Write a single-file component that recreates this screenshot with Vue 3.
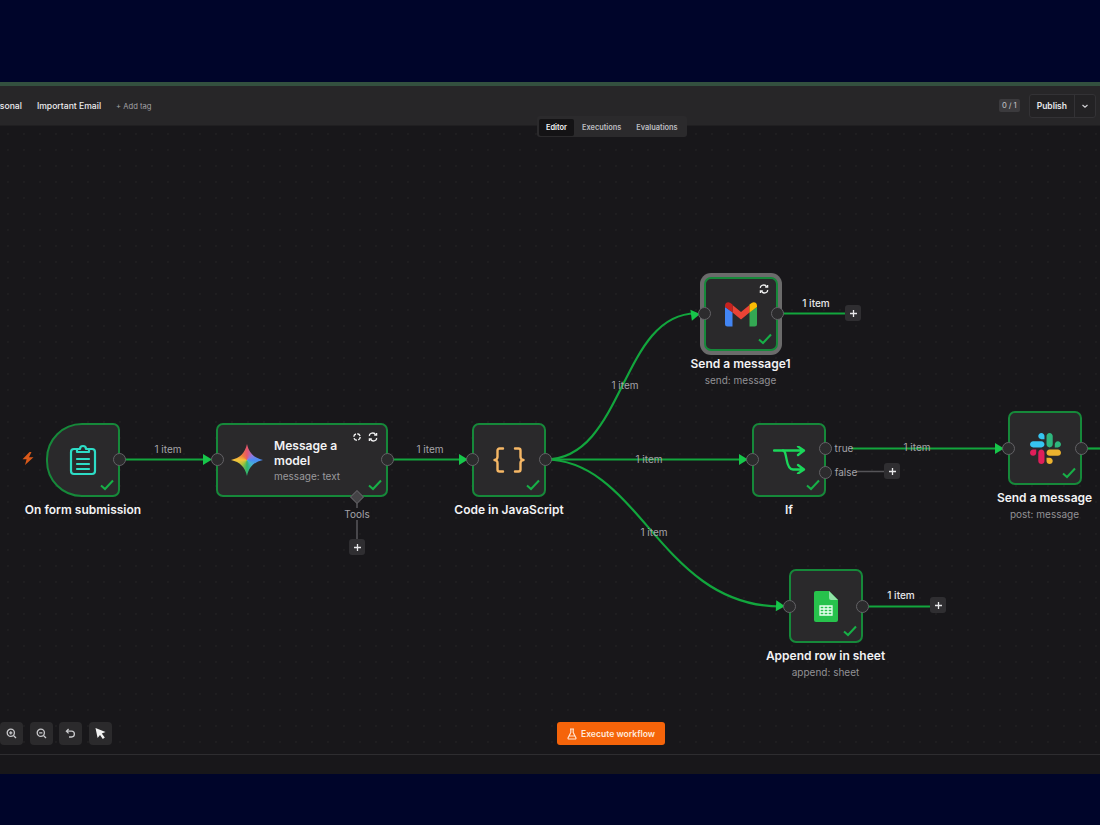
<script setup>
const TOP = 126;

const nodes = [
	{ id: 'form', x: 46, y: 423, w: 74, h: 74, trigger: true, icon: 'form', name: 'On form submission', cx: 83 },
	{ id: 'gemini', x: 216, y: 423, w: 172, h: 74, icon: 'gemini', wide: true },
	{ id: 'code', x: 472, y: 423, w: 74, h: 74, icon: 'code', name: 'Code in JavaScript', cx: 509 },
	{ id: 'gmail', x: 704, y: 277, w: 74, h: 74, icon: 'gmail', name: 'Send a message1', sub: 'send: message', cx: 740.5, selected: true },
	{ id: 'if', x: 752, y: 423, w: 74, h: 74, icon: 'if', name: 'If', cx: 789 },
	{ id: 'slack', x: 1008, y: 411, w: 74, h: 74, icon: 'slack', name: 'Send a message', sub: 'post: message', cx: 1044.5 },
	{ id: 'sheet', x: 789, y: 569, w: 74, h: 74, icon: 'sheet', name: 'Append row in sheet', sub: 'append: sheet', cx: 825.5 },
];

const ports = [
	[119, 459], [217, 459], [387, 459], [472, 459], [545, 459], [704, 313], [777, 313],
	[752, 459], [825, 448], [825, 472], [1008, 448], [1081, 448], [789, 606], [862, 606],
];

const edges = [
	'M119 459 H208',
	'M387 459 H464',
	'M545 459 C625 459 620 313 696 313',
	'M545 459 H744',
	'M545 459 C640 459 660 606 781 606',
	'M777 313 H845',
	'M851 448 H1000',
	'M862 606 H930',
	'M1081 448 H1100',
];

const arrows = [
	[216, 459, 0], [472, 459, 0], [704, 313, -8], [752, 459, 0], [789, 606, 3], [1008, 448, 0],
];

const labels = [
	{ text: '1 item', x: 168, y: 449 },
	{ text: '1 item', x: 430, y: 449 },
	{ text: '1 item', x: 625, y: 385 },
	{ text: '1 item', x: 649, y: 459 },
	{ text: '1 item', x: 654, y: 532 },
	{ text: '1 item', x: 816, y: 303, bright: true },
	{ text: '1 item', x: 917, y: 447 },
	{ text: '1 item', x: 901, y: 595, bright: true },
	{ text: 'true', x: 844, y: 448 },
	{ text: 'false', x: 846, y: 472 },
	{ text: 'Tools', x: 357, y: 514, solid: true },
];

const pluses = [
	[357, 547], [853, 313], [892, 471], [938, 605],
];

const place = (x, y) => ({ left: x + 'px', top: y - TOP + 'px' });
</script>

<template>
	<div class="page">
		<div class="band-top"></div>
		<div class="frame">
			<header class="header">
				<div class="tags">
					<span class="tag">Personal</span>
					<span class="tag">Important Email</span>
					<span class="add-tag">+ Add tag</span>
				</div>
				<div class="actions">
					<span class="count">0 / 1</span>
					<div class="publish">
						<span class="publish-label">Publish</span>
						<span class="publish-arrow">
							<svg width="10" height="10" viewBox="0 0 10 10"><path d="M2.5 4 L5 6.2 L7.5 4" fill="none" stroke="#cfcfd2" stroke-width="1.2" /></svg>
						</span>
					</div>
				</div>
			</header>

			<div class="tabs">
				<span class="tab active">Editor</span>
				<span class="tab">Executions</span>
				<span class="tab">Evaluations</span>
			</div>

			<main class="canvas">
				<svg class="wires" width="1100" height="628" viewBox="0 125.5 1100 628">
					<path d="M856 471 H885 M357 500 V540" stroke="#555458" stroke-width="1.6" fill="none" />
					<path v-for="(d, i) in edges" :key="i" :d="d" stroke="#12a63d" stroke-width="2.2" fill="none" />
					<path
						v-for="(a, i) in arrows"
						:key="'a' + i"
						d="M-13 -5.5 L-4 0 L-13 5.5 Z"
						fill="#17c64a"
						:transform="`translate(${a[0]} ${a[1]}) rotate(${a[2]})`"
					/>
				</svg>

				<div
					v-for="n in nodes"
					:key="n.id"
					class="node"
					:class="{ trigger: n.trigger, selected: n.selected }"
					:style="{ ...place(n.x, n.y), width: n.w + 'px', height: n.h + 'px' }"
				>
					<svg v-if="n.icon === 'form'" class="icon" width="28" height="32" viewBox="0 0 28 32" fill="none" stroke="#2ddcc6" stroke-width="2.2" stroke-linejoin="round" stroke-linecap="round">
						<path d="M8 5 H5 a3 3 0 0 0 -3 3 V27 a3 3 0 0 0 3 3 H23 a3 3 0 0 0 3 -3 V8 a3 3 0 0 0 -3 -3 H20" />
						<path d="M8 8 V5 H11 a3 3 0 0 1 6 0 H20 V8 Z" />
						<path d="M8 15 H20 M8 20 H20 M8 25 H20" />
					</svg>

					<template v-if="n.icon === 'gemini'">
						<div class="gemini"></div>
						<div class="gemini-text">
							<div class="gemini-title">Message a<br />model</div>
							<div class="gemini-sub">message: text</div>
						</div>
						<div class="badges">
							<svg width="10" height="10" viewBox="0 0 10 10" fill="none" stroke="#f2f2f2" stroke-width="1.4"><circle cx="5" cy="5" r="3.2" stroke-dasharray="3.6 1.4" /></svg>
							<svg width="10" height="10" viewBox="0 0 10 10" fill="none" stroke="#f2f2f2" stroke-width="1.3"><path d="M1.5 4 a3 2.4 0 0 1 6 -1 M8.5 6 a3 2.4 0 0 1 -6 1 M6.2 3.2 H8.6 V1 M3.8 6.8 H1.4 V9" /></svg>
						</div>
					</template>

					<svg v-if="n.icon === 'code'" class="icon" width="32" height="26" viewBox="0 0 32 26" fill="none" stroke="#f6b765" stroke-width="2.4" stroke-linecap="round" stroke-linejoin="round">
						<path d="M10 1.5 H6.5 a2 2 0 0 0 -2 2 V10 a3 3 0 0 1 -3 3 a3 3 0 0 1 3 3 V22.5 a2 2 0 0 0 2 2 H10" />
						<path d="M22 1.5 H25.5 a2 2 0 0 1 2 2 V10 a3 3 0 0 0 3 3 a3 3 0 0 0 -3 3 V22.5 a2 2 0 0 1 -2 2 H22" />
					</svg>

					<template v-if="n.icon === 'gmail'">
						<svg class="icon" width="32" height="25" viewBox="0 0 32 25">
							<path d="M0 5 V22 a2.5 2.5 0 0 0 2.5 2.5 H7.5 V10 Z" fill="#4285f4" />
							<path d="M32 5 V22 a2.5 2.5 0 0 1 -2.5 2.5 H24.5 V10 Z" fill="#34a853" />
							<path d="M24.5 3 L16 10 L7.5 3 L7.5 10.5 L16 17.5 L24.5 10.5 Z" fill="#ea4335" />
							<path d="M24.5 10.5 V2.5 L27 0.7 C29 -0.6 32 0.6 32 3.5 V5 Z" fill="#fbbc04" />
							<path d="M7.5 10.5 V2.5 L5 0.7 C3 -0.6 0 0.6 0 3.5 V5 Z" fill="#c5221f" />
						</svg>
						<div class="badges one">
							<svg width="10" height="10" viewBox="0 0 10 10" fill="none" stroke="#f2f2f2" stroke-width="1.3"><path d="M1.5 4 a3 2.4 0 0 1 6 -1 M8.5 6 a3 2.4 0 0 1 -6 1 M6.2 3.2 H8.6 V1 M3.8 6.8 H1.4 V9" /></svg>
						</div>
					</template>

					<svg v-if="n.icon === 'if'" class="icon" width="33" height="28" viewBox="0 0 33 28" fill="none" stroke="#1bd65a" stroke-width="2.3" stroke-linecap="round" stroke-linejoin="round">
						<path d="M1 4.5 H30 M25 0.5 L31 4.5 L25 9" />
						<path d="M10 4.5 C12 4.5 12.5 8 13.5 13 C14.5 19 16 23.5 20 23.5 H30 M25 19 L31 23.5 L25 27.5" />
					</svg>

					<svg v-if="n.icon === 'slack'" class="icon" width="31" height="31" viewBox="0 0 2447.6 2452.5">
						<path fill="#36c5f0" d="M897.4 0c-135.3.1-244.8 109.9-244.7 245.2-.1 135.3 109.5 245.1 244.8 245.2h244.8v-245.1C1142.3 110.1 1032.7.3 897.4 0m0 654H244.8C109.5 654.1-.1 763.9 0 899.2c-.2 135.3 109.4 245.1 244.7 245.3h652.7c135.3-.1 244.9-109.9 244.8-245.2.1-135.4-109.5-245.2-244.8-245.3z" />
						<path fill="#2eb67d" d="M2447.6 899.2c.1-135.3-109.5-245.1-244.8-245.2-135.3.1-244.9 109.9-244.8 245.2v245.3h244.8c135.3-.1 244.9-109.9 244.8-245.3zm-652.7 0V245.2c.1-135.2-109.4-245-244.7-245.2-135.3.1-244.9 109.9-244.8 245.2v654c-.2 135.3 109.4 245.1 244.7 245.3 135.3-.1 244.9-109.9 244.8-245.3z" />
						<path fill="#ecb22e" d="M1550.1 2452.5c135.3-.1 244.9-109.9 244.8-245.2.1-135.3-109.5-245.1-244.8-245.2h-244.8v245.2c-.1 135.2 109.5 245 244.8 245.2zm0-654.1h652.7c135.3-.1 244.9-109.9 244.8-245.2.2-135.3-109.4-245.1-244.7-245.3h-652.7c-135.3.1-244.9 109.9-244.8 245.2-.1 135.4 109.4 245.2 244.7 245.3z" />
						<path fill="#e01e5a" d="M0 1553.2c-.1 135.3 109.5 245.1 244.8 245.2 135.3-.1 244.9-109.9 244.8-245.2v-245.2H244.8c-135.3.1-244.9 109.9-244.8 245.2zm652.7 0v654c-.2 135.3 109.4 245.1 244.7 245.3 135.3-.1 244.9-109.9 244.8-245.2v-653.9c.2-135.3-109.4-245.1-244.7-245.3-135.4 0-244.9 109.8-244.8 245.1z" />
					</svg>

					<svg v-if="n.icon === 'sheet'" class="icon" width="24" height="31" viewBox="0 0 24 31">
						<path d="M2 0 H15 L24 9 V29 a2 2 0 0 1 -2 2 H2 a2 2 0 0 1 -2 -2 V2 a2 2 0 0 1 2 -2 Z" fill="#27c24c" />
						<path d="M15 0 L24 9 H17 a2 2 0 0 1 -2 -2 Z" fill="#8fe3a6" />
						<path d="M6 15 H18 V24 H6 Z M10 15 V24 M14 15 V24 M6 18 H18 M6 21 H18" fill="none" stroke="#eafff0" stroke-width="1.3" />
					</svg>

					<svg class="check" width="14" height="12" viewBox="0 0 14 12" fill="none" stroke="#17b047" stroke-width="2">
						<path d="M1 6.5 L5 10 L13 1.5" />
					</svg>
				</div>

				<template v-for="n in nodes" :key="'text' + n.id">
					<div v-if="n.name" class="node-text" :style="place(n.cx, n.y + n.h + 5)">
						<div class="node-name">{{ n.name }}</div>
						<div v-if="n.sub" class="node-sub">{{ n.sub }}</div>
					</div>
				</template>

				<span v-for="(p, i) in ports" :key="'p' + i" class="port" :style="place(p[0], p[1])"></span>
				<span class="diamond" :style="place(357, 497)"></span>

				<span
					v-for="(l, i) in labels"
					:key="'l' + i"
					class="edge-label"
					:class="{ bright: l.bright, solid: l.solid }"
					:style="place(l.x, l.y)"
					>{{ l.text }}</span
				>

				<span v-for="(p, i) in pluses" :key="'b' + i" class="plus" :style="place(p[0], p[1])">
					<svg width="9" height="9" viewBox="0 0 9 9"><path d="M4.5 1 V8 M1 4.5 H8" stroke="#e8e8ea" stroke-width="1.3" /></svg>
				</span>

				<svg class="bolt" :style="place(22, 452)" width="12" height="13" viewBox="0 0 12 13">
					<path d="M7.5 0 L0.5 7.2 H4.6 L3 13 L11.5 5.2 H7 L9.5 0 Z" fill="#d9591a" />
				</svg>

				<div class="zoom-bar">
					<button class="tool">
						<svg width="11" height="11" viewBox="0 0 11 11" fill="none" stroke="#c9c9cc" stroke-width="1.3"><circle cx="4.8" cy="4.8" r="3.6" /><path d="M7.5 7.5 L10 10 M3.2 4.8 H6.4 M4.8 3.2 V6.4" /></svg>
					</button>
					<button class="tool">
						<svg width="11" height="11" viewBox="0 0 11 11" fill="none" stroke="#c9c9cc" stroke-width="1.3"><circle cx="4.8" cy="4.8" r="3.6" /><path d="M7.5 7.5 L10 10 M3.2 4.8 H6.4" /></svg>
					</button>
					<button class="tool">
						<svg width="11" height="11" viewBox="0 0 11 11" fill="none" stroke="#c9c9cc" stroke-width="1.3"><path d="M3.6 1 L1.4 3.2 L3.6 5.4 M1.6 3.2 H6.5 a2.8 2.8 0 0 1 0 5.8 H4" /></svg>
					</button>
					<button class="tool">
						<svg width="13" height="13" viewBox="0 0 13 13"><path d="M1.5 1 L11.5 5 L7.8 6.6 L10.8 10.6 L8.8 12 L6 8 L3.6 11 Z" fill="#f2f2f2" /></svg>
					</button>
				</div>

				<button class="execute">
					<svg width="10" height="12" viewBox="0 0 10 12" fill="none" stroke="#ffe3d1" stroke-width="1.2" stroke-linejoin="round"><path d="M3 1 H7 M3.8 1 V4.5 L1 10 a0.8 0.8 0 0 0 0.7 1 H8.3 a0.8 0.8 0 0 0 0.7 -1 L6.2 4.5 V1 M2.4 8 H7.6" /></svg>
					Execute workflow
				</button>
			</main>

			<footer class="footer"></footer>
		</div>
		<div class="band-bottom"></div>
	</div>
</template>

<style scoped>
.page {
	width: 1100px;
	height: 825px;
	overflow: hidden;
	display: flex;
	flex-direction: column;
	background-color: #00052a;
	font-family: Inter, 'Liberation Sans', sans-serif;
}
.band-top {
	height: 82px;
	flex: none;
}
.band-bottom {
	height: 51px;
	flex: none;
}
.frame {
	position: relative;
	flex: 1;
	display: flex;
	flex-direction: column;
	border-top: 4px solid #33503f;
	background-color: #18171a;
}
.header {
	height: 40px;
	flex: none;
	display: flex;
	align-items: center;
	justify-content: space-between;
	background-color: #272628;
	border-bottom: 1px solid #201f21;
	box-sizing: border-box;
	padding-right: 4px;
}
.tags {
	display: flex;
	align-items: center;
	gap: 15px;
	margin-left: -14px;
	padding-top: 1px;
}
.tag {
	font-size: 8.6px;
	font-weight: 500;
	color: #ececee;
}
.add-tag {
	font-size: 7.6px;
	color: #a2a1a5;
	padding-top: 1px;
}
.actions {
	display: flex;
	align-items: center;
	gap: 9px;
}
.count {
	font-size: 7.5px;
	font-weight: 500;
	color: #b9b9bc;
	background-color: #3b3a3d;
	border-radius: 2px;
	padding: 2px 3px;
}
.publish {
	display: flex;
	align-items: center;
	height: 22px;
	border: 1px solid #333235;
	border-radius: 3px;
	background-color: #232224;
}
.publish-label {
	font-size: 8.5px;
	font-weight: 600;
	color: #e8e8ea;
	padding: 0 7px;
}
.publish-arrow {
	display: flex;
	align-items: center;
	justify-content: center;
	width: 20px;
	height: 100%;
	border-left: 1px solid #333235;
}
.tabs {
	position: absolute;
	left: 537px;
	top: 30px;
	display: flex;
	align-items: center;
	gap: 1px;
	height: 21px;
	padding: 1px 2px 0;
	box-sizing: border-box;
	background-color: #2b2a2c;
	border-radius: 3px;
	z-index: 2;
}
.tab {
	font-size: 7.4px;
	font-weight: 600;
	color: #bdbdc0;
	padding: 4px 7px;
	border-radius: 2px;
}
.tab.active {
	color: #f2f2f4;
	background-color: #141315;
}
.canvas {
	position: relative;
	flex: 1;
	overflow: hidden;
	background-color: #18171a;
	background-image: radial-gradient(#1f1e20 0.7px, transparent 0.8px);
	background-size: 16px 16px;
}
.wires {
	position: absolute;
	left: 0;
	top: 0;
}
.node {
	position: absolute;
	box-sizing: border-box;
	display: flex;
	align-items: center;
	justify-content: center;
	background-color: #2a292b;
	border: 2px solid #16893a;
	border-radius: 7px;
}
.node.trigger {
	border-radius: 36px 7px 7px 36px;
}
.node.selected {
	box-shadow: 0 0 0 4px #6b6b6b;
}
.check {
	position: absolute;
	right: 4px;
	bottom: 4px;
}
.gemini {
	position: absolute;
	left: 13px;
	top: 19px;
	width: 32px;
	height: 32px;
	background: conic-gradient(from 0deg, #e8566b, #8e78e0 50deg, #4a8df5 90deg, #46b2d0 135deg, #2fb56a 180deg, #a7c23c 225deg, #f5c33b 270deg, #ee7b3c 315deg, #e8566b);
	clip-path: path('M16 0 C18 9 23 14 32 16 C23 18 18 23 16 32 C14 23 9 18 0 16 C9 14 14 9 16 0 Z');
}
.gemini-text {
	position: absolute;
	left: 56px;
	top: 13px;
}
.gemini-title {
	font-size: 12.1px;
	line-height: 15px;
	font-weight: 600;
	color: #f2f2f4;
}
.gemini-sub {
	font-size: 10px;
	line-height: 16px;
	color: #9a999d;
}
.badges {
	position: absolute;
	right: 8px;
	top: 7px;
	display: flex;
	gap: 6px;
}
.badges.one {
	right: 7px;
	top: 5px;
}
.node-text {
	position: absolute;
	transform: translateX(-50%);
	text-align: center;
	white-space: nowrap;
}
.node-name {
	font-size: 12px;
	line-height: 16px;
	font-weight: 600;
	color: #f2f2f4;
}
.node-sub {
	font-size: 10px;
	line-height: 16px;
	color: #929195;
}
.port {
	position: absolute;
	width: 11px;
	height: 11px;
	margin: -6.5px 0 0 -6.5px;
	box-sizing: content-box;
	background-color: #2c2b2d;
	border: 1.5px solid #636266;
	border-radius: 50%;
}
.diamond {
	position: absolute;
	width: 8px;
	height: 8px;
	margin: -5px 0 0 -5px;
	background-color: #444346;
	border: 1px solid #5f5e62;
	transform: rotate(45deg);
}
.edge-label {
	position: absolute;
	transform: translate(-50%, -50%);
	font-size: 10px;
	color: #a5a4a9;
	white-space: nowrap;
}
.edge-label.bright {
	color: #e6e6e8;
	font-weight: 500;
}
.edge-label.solid {
	background-color: #18171a;
	padding: 0 2px;
}
.plus {
	position: absolute;
	width: 16px;
	height: 16px;
	margin: -8px 0 0 -8px;
	display: flex;
	align-items: center;
	justify-content: center;
	background-color: #2f2e31;
	border-radius: 3px;
}
.bolt {
	position: absolute;
}
.zoom-bar {
	position: absolute;
	left: 0;
	bottom: 9px;
	display: flex;
	gap: 6.7px;
}
.tool {
	width: 23px;
	height: 23px;
	padding: 0;
	display: flex;
	align-items: center;
	justify-content: center;
	background-color: #2b2a2c;
	border: none;
	border-radius: 4px;
}
.execute {
	position: absolute;
	left: 557px;
	bottom: 9px;
	width: 108px;
	height: 23px;
	padding: 0;
	display: flex;
	align-items: center;
	justify-content: center;
	gap: 4px;
	font-family: inherit;
	font-size: 8.6px;
	font-weight: 600;
	color: #ffeadd;
	background-color: #f5640a;
	border: none;
	border-radius: 3px;
}
.footer {
	height: 20px;
	flex: none;
	box-sizing: border-box;
	border-top: 1px solid #2e2d30;
	background-color: #18171a;
}
</style>
